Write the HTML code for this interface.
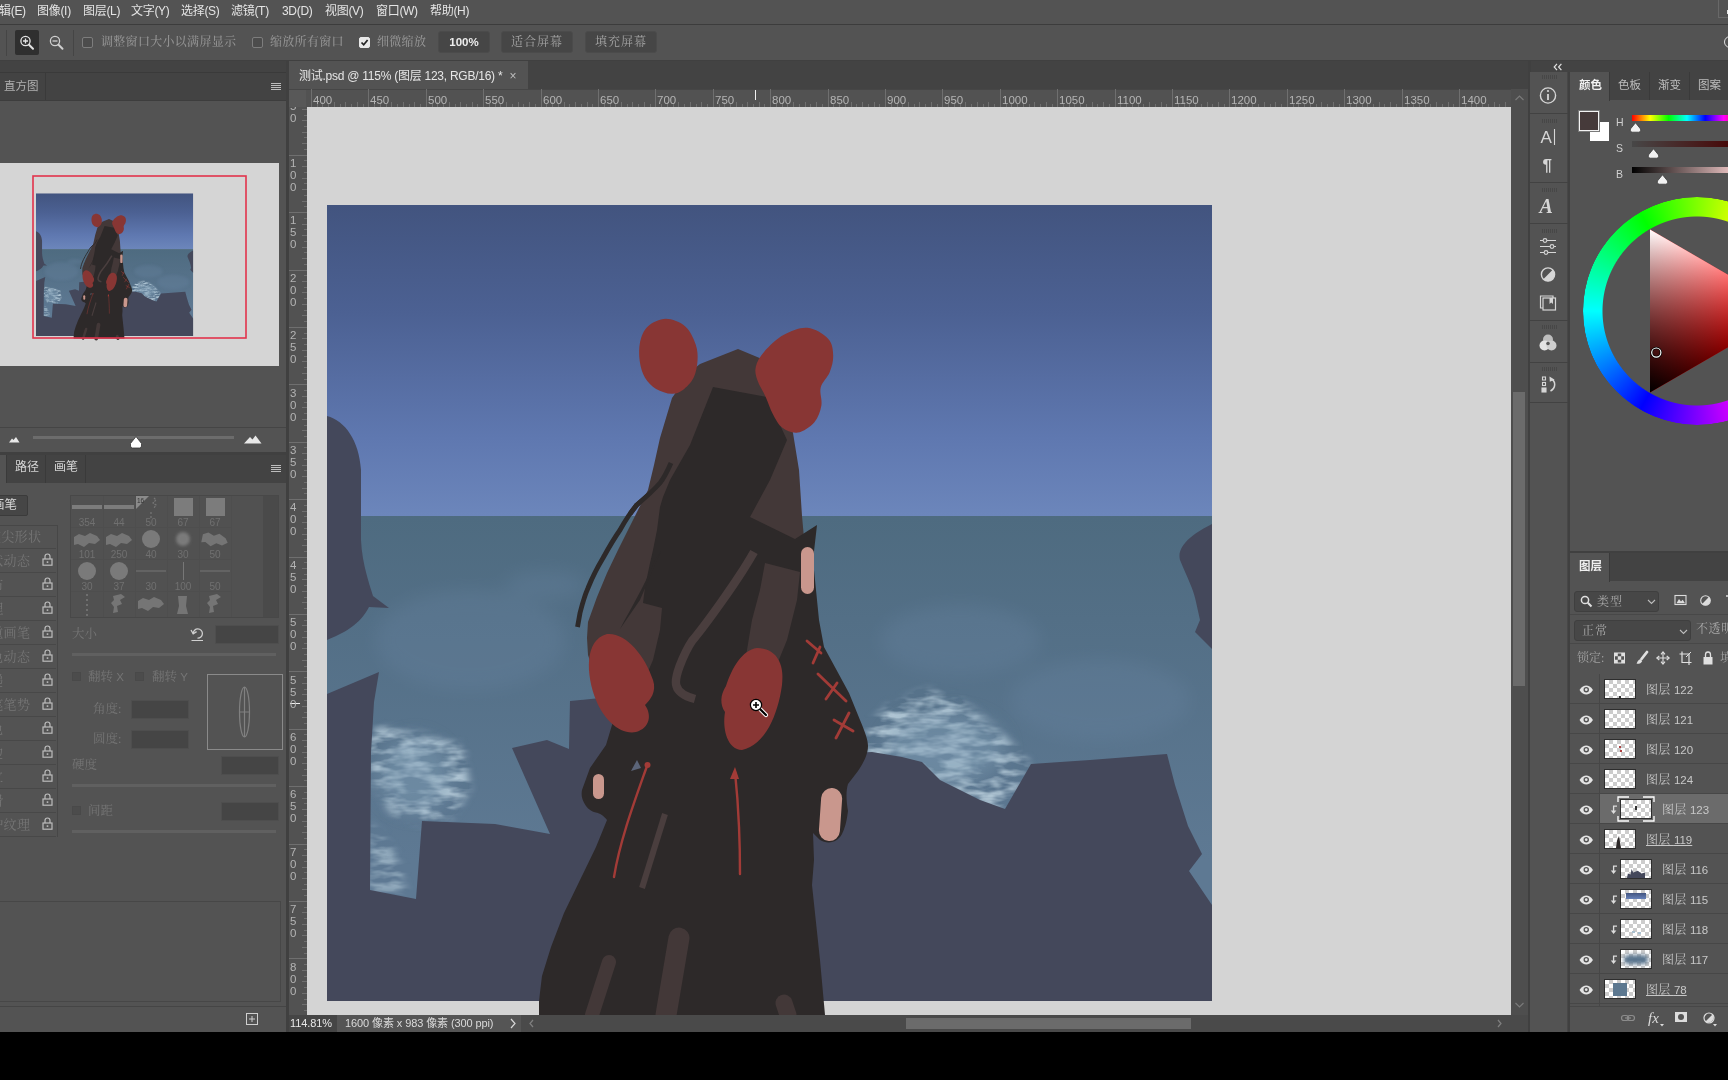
<!DOCTYPE html>
<html lang="zh-CN">
<head>
<meta charset="utf-8">
<title>测试.psd</title>
<style>
*{box-sizing:border-box;margin:0;padding:0}
html,body{width:1728px;height:1080px;overflow:hidden;background:#535353}
body{will-change:transform}
body{position:relative;font-family:"Liberation Sans","Noto Sans CJK SC",sans-serif;font-size:12px;color:#dcdcdc}
.abs{position:absolute}
.serif{font-family:"Liberation Serif","Noto Serif CJK SC",serif}
#menubar{left:0;top:0;width:1728px;height:24px;background:#535353}
#menubar span{position:absolute;top:2px;font-size:12px;line-height:18px;height:18px;color:#e4e4e4;white-space:nowrap;letter-spacing:-0.3px;font-family:"Liberation Sans","Noto Sans CJK SC",sans-serif}
#menuline{left:0;top:24px;width:1728px;height:1px;background:#3c3c3c}
#optbar{left:0;top:25px;width:1728px;height:35px;background:#535353}
#darkband{left:0;top:60px;width:1728px;height:972px;background:#404040}
#blackbar{left:0;top:1032px;width:1728px;height:48px;background:#000}
/* left column */
#leftcol{left:0;top:61px;width:286px;height:971px;background:#535353}
.tabbar{background:#434343}
.tab{position:absolute;top:0;height:100%;font-size:11.5px;color:#bdbdbd;border-right:1px solid #3a3a3a;white-space:nowrap}
.menuicon{position:absolute;width:10px;height:7px;border-top:1px solid #bdbdbd;border-bottom:1px solid #bdbdbd}
.menuicon:before{content:"";position:absolute;left:0;top:1px;width:10px;height:1px;background:#bdbdbd;box-shadow:0 2px 0 #bdbdbd}
/* document */
#doctabbar{left:289px;top:61px;width:1239px;height:28px;background:#434343}
#doctab{left:0;top:0;width:239px;height:28px;background:#535353;font-size:12px;color:#e6e6e6;white-space:nowrap;padding:7px 0 0 10px;letter-spacing:-0.25px;line-height:16px}
#hruler{left:289px;top:89px;width:1222px;height:18px;background:#525252;overflow:hidden}
#vruler{left:289px;top:107px;width:18px;height:908px;background:#525252;overflow:hidden}
#paste{left:307px;top:107px;width:1204px;height:908px;background:#d4d4d4;overflow:hidden}
#vscroll{left:1511px;top:89px;width:17px;height:926px;background:#4e4e4e}
#status{left:289px;top:1015px;width:1239px;height:17px;background:#4a4a4a}
/* right */
#strip{left:1530px;top:72px;width:38px;height:960px;background:#535353}
#rightcol{left:1570px;top:72px;width:158px;height:960px;background:#535353}

.cb{width:11px;height:11px;border:1px solid #7d7d7d;border-radius:2px;background:#4c4c4c}
.ot{font-size:12px;font-weight:500;color:#949494;white-space:nowrap;letter-spacing:0.3px;line-height:16px}
.ob{top:6px;height:22px;border:1px solid #4b4b4b;background:#464646;border-radius:3px;text-align:center;line-height:20px;font-size:12px;color:#a6a6a6;white-space:nowrap}
</style>
</head>
<body>
<div class="abs" id="menubar">
<span style="left:-1px">辑(E)</span><span style="left:37px">图像(I)</span><span style="left:83px">图层(L)</span><span style="left:131px">文字(Y)</span><span style="left:181px">选择(S)</span><span style="left:231px">滤镜(T)</span><span style="left:282px">3D(D)</span><span style="left:325px">视图(V)</span><span style="left:376px">窗口(W)</span><span style="left:430px">帮助(H)</span>
<div class="abs" style="left:1718px;top:-1px;width:20px;height:19px;border:1px solid #686868"></div><div class="abs" style="left:1727px;top:10px;width:3px;height:4px;background:#e8e8e8"></div></div>
<div class="abs" id="menuline"></div>
<div class="abs" id="optbar">
<div class="abs" style="left:6px;top:5px;width:1px;height:26px;background:#454545"></div>
<div class="abs" style="left:15px;top:5px;width:24px;height:25px;background:#2f2f2f;border-radius:2px"></div>
<svg class="abs" style="left:15px;top:5px" width="60" height="25" viewBox="0 0 60 25" fill="none" stroke="#e4e4e4" stroke-width="1.3">
<circle cx="10.5" cy="11" r="4.6"/><path d="M8,11 H13 M10.5,8.5 V13.5"/><path d="M14,14.7 L18,18.7" stroke-width="2" stroke-linecap="round"/>
<g stroke="#d0d0d0"><circle cx="40" cy="11" r="4.6"/><path d="M37.5,11 H42.5"/><path d="M43.5,14.7 L47.5,18.7" stroke-width="2" stroke-linecap="round"/></g>
</svg>
<div class="abs" style="left:73px;top:5px;width:1px;height:26px;background:#454545"></div>
<div class="abs cb" style="left:82px;top:12px"></div>
<div class="abs serif ot" style="left:101px;top:9px">调整窗口大小以满屏显示</div>
<div class="abs cb" style="left:252px;top:12px"></div>
<div class="abs serif ot" style="left:270px;top:9px">缩放所有窗口</div>
<div class="abs cb" style="left:359px;top:12px;background:#e8e8e8;border-color:#e8e8e8"><svg width="11" height="11" viewBox="0 0 11 11" style="position:absolute;left:-1px;top:-1px"><path d="M2.5,5.5 L4.7,7.8 L8.6,3" fill="none" stroke="#222" stroke-width="1.7"/></svg></div>
<div class="abs serif ot" style="left:377px;top:9px">细微缩放</div>
<div class="abs ob" style="left:438px;width:52px;color:#ececec;font-size:11.5px;font-weight:bold">100%</div>
<div class="abs ob serif" style="left:501px;width:72px;letter-spacing:1px">适合屏幕</div>
<div class="abs ob serif" style="left:585px;width:72px;letter-spacing:1px">填充屏幕</div>
<div class="abs" style="left:1724px;top:11px;width:12px;height:12px;border:1.5px solid #e0e0e0;border-radius:50%"></div>
</div>
<div class="abs" id="darkband"></div>
<div class="abs" id="leftcol"><div class="abs tabbar" style="left:0;top:0;width:286px;height:39px"></div>
<div class="abs" style="left:0;top:11px;width:286px;height:1px;background:#3a3a3a"></div>
<div class="abs tab" style="left:0;top:12px;width:46px;height:27px;line-height:26px;padding-left:4px;color:#b0b0b0">直方图</div>
<div class="menuicon" style="left:271px;top:22px"></div>
<div class="abs" style="left:0;top:39px;width:286px;height:1px;background:#3d3d3d"></div>
<div class="abs" style="left:0;top:102px;width:279px;height:203px;background:#d5d5d5;overflow:hidden"><!--NAV--><svg class="abs" style="left:0;top:0" width="279" height="203" viewBox="0 163 279 203"><use href="#artall" transform="translate(36 193.3) scale(0.1777 0.1793) translate(-327 -205)"/><rect x="33" y="176" width="213" height="162" fill="none" stroke="#e2334c" stroke-width="1.6"/></svg><!--/NAV--></div>
<div class="abs" style="left:0;top:366px;width:286px;height:1px;background:#454545"></div>
<div class="abs" style="left:33px;top:375px;width:201px;height:3px;background:#6c6c6c"></div>
<svg class="abs" style="left:0;top:370px" width="286" height="20" viewBox="0 431 286 20"><path d="M9,442.5 L12,438.5 L13.5,440 L16,437 L19.5,442.5 Z" fill="#e8e8e8"/><path d="M244,443.5 L250,437 L252.5,439.5 L255.5,435.5 L261.5,443.5 Z" fill="#e8e8e8"/><path d="M136,436.5 L141.5,443.5 V446 Q141.5,448 139.5,448 H132.5 Q130.5,448 130.5,446 V443.5 Z" fill="#fff" stroke="#333" stroke-width="0.8"/></svg>
<div class="abs" style="left:0;top:391px;width:286px;height:3px;background:#404040"></div>
<div class="abs tabbar" style="left:0;top:394px;width:286px;height:28px"></div>
<div class="abs" style="left:0;top:394px;width:6px;height:28px;background:#535353"></div>
<div class="abs tab" style="left:6px;top:394px;width:40px;height:28px;line-height:24px;padding-left:8px;border-left:1px solid #3a3a3a;color:#d4d4d4;font-size:12px">路径</div>
<div class="abs tab" style="left:46px;top:394px;width:40px;height:28px;line-height:24px;padding-left:8px;color:#d4d4d4;font-size:12px">画笔</div>
<div class="menuicon" style="left:271px;top:404px"></div>
<div class="abs" style="left:-3px;top:434px;width:31px;height:21px;background:#464646;border:1px solid #3b3b3b;border-radius:2px;overflow:hidden"><span class="abs" style="left:-6px;top:1px;font-size:12.5px;color:#d6d6d6;white-space:nowrap;line-height:17px">画笔</span></div>
<div class="abs" style="left:-1px;top:464px;width:59px;height:312px;border:1px solid #474747;border-bottom:none"></div>
<div class="abs" style="left:0;top:487px;width:56px;height:1px;background:#484848"></div>
<div class="abs serif" style="left:-12px;top:467px;font-size:13px;letter-spacing:0.3px;line-height:18px;color:#757575;white-space:nowrap">笔尖形状</div>
<div class="abs" style="left:0;top:511px;width:56px;height:1px;background:#484848"></div>
<div class="abs serif" style="left:-23px;top:491px;font-size:13px;letter-spacing:0.3px;line-height:18px;color:#757575;white-space:nowrap">形状动态</div>
<div class="abs" style="left:42px;top:492px;width:11px;height:13px"><svg width="11" height="13" viewBox="0 0 11 13" fill="none" stroke="#bcbcbc" stroke-width="1.2"><path d="M3,6 V3.6 Q3,1 5.5,1 Q8,1 8,3.6 V6"/><rect x="1" y="6" width="9" height="6.2"/><rect x="4.7" y="8.3" width="1.6" height="1.6" fill="#bcbcbc" stroke="none"/></svg></div>
<div class="abs" style="left:0;top:535px;width:56px;height:1px;background:#484848"></div>
<div class="abs serif" style="left:-23px;top:515px;font-size:13px;letter-spacing:0.3px;line-height:18px;color:#757575;white-space:nowrap">散布</div>
<div class="abs" style="left:42px;top:516px;width:11px;height:13px"><svg width="11" height="13" viewBox="0 0 11 13" fill="none" stroke="#bcbcbc" stroke-width="1.2"><path d="M3,6 V3.6 Q3,1 5.5,1 Q8,1 8,3.6 V6"/><rect x="1" y="6" width="9" height="6.2"/><rect x="4.7" y="8.3" width="1.6" height="1.6" fill="#bcbcbc" stroke="none"/></svg></div>
<div class="abs" style="left:0;top:559px;width:56px;height:1px;background:#484848"></div>
<div class="abs serif" style="left:-23px;top:539px;font-size:13px;letter-spacing:0.3px;line-height:18px;color:#757575;white-space:nowrap">纹理</div>
<div class="abs" style="left:42px;top:540px;width:11px;height:13px"><svg width="11" height="13" viewBox="0 0 11 13" fill="none" stroke="#bcbcbc" stroke-width="1.2"><path d="M3,6 V3.6 Q3,1 5.5,1 Q8,1 8,3.6 V6"/><rect x="1" y="6" width="9" height="6.2"/><rect x="4.7" y="8.3" width="1.6" height="1.6" fill="#bcbcbc" stroke="none"/></svg></div>
<div class="abs" style="left:0;top:583px;width:56px;height:1px;background:#484848"></div>
<div class="abs serif" style="left:-23px;top:563px;font-size:13px;letter-spacing:0.3px;line-height:18px;color:#757575;white-space:nowrap">双重画笔</div>
<div class="abs" style="left:42px;top:564px;width:11px;height:13px"><svg width="11" height="13" viewBox="0 0 11 13" fill="none" stroke="#bcbcbc" stroke-width="1.2"><path d="M3,6 V3.6 Q3,1 5.5,1 Q8,1 8,3.6 V6"/><rect x="1" y="6" width="9" height="6.2"/><rect x="4.7" y="8.3" width="1.6" height="1.6" fill="#bcbcbc" stroke="none"/></svg></div>
<div class="abs" style="left:0;top:607px;width:56px;height:1px;background:#484848"></div>
<div class="abs serif" style="left:-23px;top:587px;font-size:13px;letter-spacing:0.3px;line-height:18px;color:#757575;white-space:nowrap">颜色动态</div>
<div class="abs" style="left:42px;top:588px;width:11px;height:13px"><svg width="11" height="13" viewBox="0 0 11 13" fill="none" stroke="#bcbcbc" stroke-width="1.2"><path d="M3,6 V3.6 Q3,1 5.5,1 Q8,1 8,3.6 V6"/><rect x="1" y="6" width="9" height="6.2"/><rect x="4.7" y="8.3" width="1.6" height="1.6" fill="#bcbcbc" stroke="none"/></svg></div>
<div class="abs" style="left:0;top:631px;width:56px;height:1px;background:#484848"></div>
<div class="abs serif" style="left:-23px;top:611px;font-size:13px;letter-spacing:0.3px;line-height:18px;color:#757575;white-space:nowrap">传递</div>
<div class="abs" style="left:42px;top:612px;width:11px;height:13px"><svg width="11" height="13" viewBox="0 0 11 13" fill="none" stroke="#bcbcbc" stroke-width="1.2"><path d="M3,6 V3.6 Q3,1 5.5,1 Q8,1 8,3.6 V6"/><rect x="1" y="6" width="9" height="6.2"/><rect x="4.7" y="8.3" width="1.6" height="1.6" fill="#bcbcbc" stroke="none"/></svg></div>
<div class="abs" style="left:0;top:655px;width:56px;height:1px;background:#484848"></div>
<div class="abs serif" style="left:-23px;top:635px;font-size:13px;letter-spacing:0.3px;line-height:18px;color:#757575;white-space:nowrap">画笔笔势</div>
<div class="abs" style="left:42px;top:636px;width:11px;height:13px"><svg width="11" height="13" viewBox="0 0 11 13" fill="none" stroke="#bcbcbc" stroke-width="1.2"><path d="M3,6 V3.6 Q3,1 5.5,1 Q8,1 8,3.6 V6"/><rect x="1" y="6" width="9" height="6.2"/><rect x="4.7" y="8.3" width="1.6" height="1.6" fill="#bcbcbc" stroke="none"/></svg></div>
<div class="abs" style="left:0;top:679px;width:56px;height:1px;background:#484848"></div>
<div class="abs serif" style="left:-23px;top:659px;font-size:13px;letter-spacing:0.3px;line-height:18px;color:#757575;white-space:nowrap">杂色</div>
<div class="abs" style="left:42px;top:660px;width:11px;height:13px"><svg width="11" height="13" viewBox="0 0 11 13" fill="none" stroke="#bcbcbc" stroke-width="1.2"><path d="M3,6 V3.6 Q3,1 5.5,1 Q8,1 8,3.6 V6"/><rect x="1" y="6" width="9" height="6.2"/><rect x="4.7" y="8.3" width="1.6" height="1.6" fill="#bcbcbc" stroke="none"/></svg></div>
<div class="abs" style="left:0;top:703px;width:56px;height:1px;background:#484848"></div>
<div class="abs serif" style="left:-23px;top:683px;font-size:13px;letter-spacing:0.3px;line-height:18px;color:#757575;white-space:nowrap">湿边</div>
<div class="abs" style="left:42px;top:684px;width:11px;height:13px"><svg width="11" height="13" viewBox="0 0 11 13" fill="none" stroke="#bcbcbc" stroke-width="1.2"><path d="M3,6 V3.6 Q3,1 5.5,1 Q8,1 8,3.6 V6"/><rect x="1" y="6" width="9" height="6.2"/><rect x="4.7" y="8.3" width="1.6" height="1.6" fill="#bcbcbc" stroke="none"/></svg></div>
<div class="abs" style="left:0;top:727px;width:56px;height:1px;background:#484848"></div>
<div class="abs serif" style="left:-23px;top:707px;font-size:13px;letter-spacing:0.3px;line-height:18px;color:#757575;white-space:nowrap">建立</div>
<div class="abs" style="left:42px;top:708px;width:11px;height:13px"><svg width="11" height="13" viewBox="0 0 11 13" fill="none" stroke="#bcbcbc" stroke-width="1.2"><path d="M3,6 V3.6 Q3,1 5.5,1 Q8,1 8,3.6 V6"/><rect x="1" y="6" width="9" height="6.2"/><rect x="4.7" y="8.3" width="1.6" height="1.6" fill="#bcbcbc" stroke="none"/></svg></div>
<div class="abs" style="left:0;top:751px;width:56px;height:1px;background:#484848"></div>
<div class="abs serif" style="left:-23px;top:731px;font-size:13px;letter-spacing:0.3px;line-height:18px;color:#757575;white-space:nowrap">平滑</div>
<div class="abs" style="left:42px;top:732px;width:11px;height:13px"><svg width="11" height="13" viewBox="0 0 11 13" fill="none" stroke="#bcbcbc" stroke-width="1.2"><path d="M3,6 V3.6 Q3,1 5.5,1 Q8,1 8,3.6 V6"/><rect x="1" y="6" width="9" height="6.2"/><rect x="4.7" y="8.3" width="1.6" height="1.6" fill="#bcbcbc" stroke="none"/></svg></div>
<div class="abs" style="left:0;top:775px;width:56px;height:1px;background:#484848"></div>
<div class="abs serif" style="left:-23px;top:755px;font-size:13px;letter-spacing:0.3px;line-height:18px;color:#757575;white-space:nowrap">保护纹理</div>
<div class="abs" style="left:42px;top:756px;width:11px;height:13px"><svg width="11" height="13" viewBox="0 0 11 13" fill="none" stroke="#bcbcbc" stroke-width="1.2"><path d="M3,6 V3.6 Q3,1 5.5,1 Q8,1 8,3.6 V6"/><rect x="1" y="6" width="9" height="6.2"/><rect x="4.7" y="8.3" width="1.6" height="1.6" fill="#bcbcbc" stroke="none"/></svg></div>
<div class="abs" style="left:70px;top:434px;width:209px;height:123px;border:1px solid #484848;background:#515151"></div>
<div class="abs" style="left:263px;top:435px;width:15px;height:121px;background:#4a4a4a"></div>
<svg class="abs" style="left:70px;top:434px" width="194" height="122" viewBox="70 495 194 122" font-family="Liberation Sans, sans-serif" font-size="10" fill="#707070" text-anchor="middle">
<path d="M103.5,496 V617" stroke="#4e4e4e" stroke-width="1"/>
<path d="M135.5,496 V617" stroke="#4e4e4e" stroke-width="1"/>
<path d="M167.5,496 V617" stroke="#4e4e4e" stroke-width="1"/>
<path d="M199.5,496 V617" stroke="#4e4e4e" stroke-width="1"/>
<path d="M231.5,496 V617" stroke="#4e4e4e" stroke-width="1"/>
<path d="M71,527.5 H231" stroke="#4e4e4e" stroke-width="1"/>
<path d="M71,559.5 H231" stroke="#4e4e4e" stroke-width="1"/>
<path d="M71,591.5 H231" stroke="#4e4e4e" stroke-width="1"/>
<text x="87" y="526">354</text>
<text x="119" y="526">44</text>
<text x="151" y="526">50</text>
<text x="183" y="526">67</text>
<text x="215" y="526">67</text>
<text x="87" y="558">101</text>
<text x="119" y="558">250</text>
<text x="151" y="558">40</text>
<text x="183" y="558">30</text>
<text x="215" y="558">50</text>
<text x="87" y="590">30</text>
<text x="119" y="590">37</text>
<text x="151" y="590">30</text>
<text x="183" y="590">100</text>
<text x="215" y="590">50</text>
<rect x="72" y="505" width="30" height="4" fill="#7c7c7c"/><rect x="104" y="505" width="30" height="4" fill="#7c7c7c"/>
<path d="M136,496 H149 L136,509 Z" fill="#8a8a8a"/><text x="140.5" y="503" font-size="6.5" fill="#333">16</text>
<path d="M154,498 l2,2 l-3,3 l3,2 l-2,3 M151,512 v2 M151,516 v2" stroke="#777" stroke-width="1.2" fill="none" stroke-dasharray="2 1"/>
<rect x="174" y="498" width="19" height="18" fill="#7c7c7c"/><rect x="206" y="498" width="19" height="18" fill="#7c7c7c"/>
<path transform="translate(87,540)" d="M-13,-3 l5,-3 l6,2 l5,-3 l7,3 l3,4 l-5,4 l-6,-1 l-5,4 l-6,-3 l-4,1 z" fill="#757575"/><path transform="translate(119,540)" d="M-13,-3 l5,-3 l6,2 l5,-3 l7,3 l3,4 l-5,4 l-6,-1 l-5,4 l-6,-3 l-4,1 z" fill="#757575"/>
<circle cx="151" cy="539" r="9" fill="#7a7a7a"/>
<circle cx="183" cy="539" r="7" fill="#7a7a7a" filter="url(#b2)"/>
<path transform="translate(215,540) rotate(12)" d="M-13,-3 l5,-3 l6,2 l5,-3 l7,3 l3,4 l-5,4 l-6,-1 l-5,4 l-6,-3 l-4,1 z" fill="#757575"/>
<circle cx="87" cy="571" r="9" fill="#7a7a7a"/><circle cx="119" cy="571" r="9" fill="#7a7a7a"/>
<path d="M136,571 H166 M200,571 H230" stroke="#777" stroke-width="1.2"/><path d="M183.5,562 V580" stroke="#777" stroke-width="1"/>
<path d="M87,594 V616" stroke="#777" stroke-width="1.6" stroke-dasharray="2 3"/>
<path d="M113,596 l8,-2 l4,3 l-5,3 l2,4 l-5,2 l1,6 l-5,1 l1,-6 l-3,-4 l3,-3 z" fill="#757575"/>
<path transform="translate(151,604)" d="M-13,-3 l5,-3 l6,2 l5,-3 l7,3 l3,4 l-5,4 l-6,-1 l-5,4 l-6,-3 l-4,1 z" fill="#757575"/>
<path d="M178,596 h9 l-1,10 l2,8 h-11 l2,-8 z" fill="#757575"/>
<path d="M209,596 l8,-2 l4,3 l-5,3 l2,4 l-5,2 l1,6 l-5,1 l1,-6 l-3,-4 l3,-3 z" fill="#757575"/>
</svg>
<div class="abs serif" style="left:72px;top:565px;color:#757575;font-size:12.5px;white-space:nowrap;line-height:16px">大小</div>
<svg class="abs" style="left:190px;top:565px" width="15" height="16" viewBox="0 0 15 16" fill="none" stroke="#d0d0d0" stroke-width="1.3"><path d="M3.2,7.5 A4.6,4.6 0 1 1 7.5,12.1"/><path d="M1,4 L3.2,7.8 L6.6,5.6" /><path d="M1.5,14.5 H13" stroke-width="1"/></svg>
<div class="abs" style="left:215px;top:564px;width:64px;height:19px;background:#454545;border:1px solid #4e4e4e"></div>
<div class="abs" style="left:72px;top:592px;width:204px;height:3px;background:#606060"></div>
<div class="abs" style="left:72px;top:723px;width:204px;height:3px;background:#606060"></div>
<div class="abs" style="left:72px;top:769px;width:204px;height:3px;background:#606060"></div>
<div class="abs" style="left:72px;top:611px;width:9px;height:9px;background:#4c4c4c;border:1px solid #494949"></div>
<div class="abs serif" style="left:88px;top:608px;color:#757575;font-size:12.5px;white-space:nowrap;line-height:16px">翻转 <span style="font-family:Liberation Sans,sans-serif;font-size:11.5px">X</span></div>
<div class="abs" style="left:135px;top:611px;width:9px;height:9px;background:#4c4c4c;border:1px solid #494949"></div>
<div class="abs serif" style="left:152px;top:608px;color:#757575;font-size:12.5px;white-space:nowrap;line-height:16px">翻转 <span style="font-family:Liberation Sans,sans-serif;font-size:11.5px">Y</span></div>
<div class="abs" style="left:207px;top:613px;width:76px;height:76px;border:1px solid #8a8a8a"></div>
<svg class="abs" style="left:207px;top:613px" width="76" height="76" viewBox="0 0 76 76" fill="none" stroke="#808080" stroke-width="1.2"><ellipse cx="37.5" cy="38" rx="5" ry="25"/><path d="M37.5,13 V63 M32.5,38 H42.5"/></svg>
<div class="abs serif" style="left:93px;top:640px;color:#757575;font-size:12.5px;white-space:nowrap;line-height:16px">角度:</div>
<div class="abs" style="left:131px;top:639px;width:58px;height:19px;background:#454545;border:1px solid #4e4e4e"></div>
<div class="abs serif" style="left:93px;top:670px;color:#757575;font-size:12.5px;white-space:nowrap;line-height:16px">圆度:</div>
<div class="abs" style="left:131px;top:669px;width:58px;height:19px;background:#454545;border:1px solid #4e4e4e"></div>
<div class="abs serif" style="left:72px;top:696px;color:#757575;font-size:12.5px;white-space:nowrap;line-height:16px">硬度</div>
<div class="abs" style="left:221px;top:695px;width:58px;height:19px;background:#454545;border:1px solid #4e4e4e"></div>
<div class="abs" style="left:72px;top:745px;width:9px;height:9px;background:#4c4c4c;border:1px solid #494949"></div>
<div class="abs serif" style="left:88px;top:742px;color:#757575;font-size:12.5px;white-space:nowrap;line-height:16px">间距</div>
<div class="abs" style="left:221px;top:741px;width:58px;height:19px;background:#454545;border:1px solid #4e4e4e"></div>
<div class="abs" style="left:-1px;top:840px;width:282px;height:101px;border:1px solid #474747"></div>
<div class="abs" style="left:0;top:945px;width:286px;height:1px;background:#454545"></div>
<svg class="abs" style="left:246px;top:952px" width="12" height="12" viewBox="0 0 12 12" fill="none" stroke="#cfcfcf" stroke-width="1"><rect x="0.5" y="0.5" width="11" height="11"/><path d="M3,6 H9 M6,3 V9"/></svg></div>
<div class="abs" id="doctabbar"><div class="abs" id="doctab">测试.psd @ 115% (图层 123, RGB/16) * <span style="color:#bdbdbd;margin-left:4px">×</span></div></div>
<div class="abs" id="hruler"><div class="abs" style="left:0;top:0;width:1222px;height:1px;background:#464646"></div><div class="abs" style="left:0;top:1px;width:17px;height:17px;background-color:#585858;background-image:radial-gradient(#4a4a4a 0.6px,transparent 0.7px);background-size:2px 2px"></div>
<svg class="abs" style="left:0;top:0" width="1222" height="18" viewBox="289 89 1222 18" shape-rendering="crispEdges">
<path d="M311.5,89 V107 M317.5,104 V107 M322.5,102 V107 M328.5,104 V107 M334.5,102 V107 M340.5,104 V107 M345.5,102 V107 M351.5,104 V107 M357.5,102 V107 M363.5,104 V107 M368.5,89 V107 M374.5,104 V107 M380.5,102 V107 M386.5,104 V107 M391.5,102 V107 M397.5,104 V107 M403.5,102 V107 M409.5,104 V107 M414.5,102 V107 M420.5,104 V107 M426.5,89 V107 M432.5,104 V107 M437.5,102 V107 M443.5,104 V107 M449.5,102 V107 M455.5,104 V107 M460.5,102 V107 M466.5,104 V107 M472.5,102 V107 M477.5,104 V107 M483.5,89 V107 M489.5,104 V107 M495.5,102 V107 M500.5,104 V107 M506.5,102 V107 M512.5,104 V107 M518.5,102 V107 M523.5,104 V107 M529.5,102 V107 M535.5,104 V107 M541.5,89 V107 M546.5,104 V107 M552.5,102 V107 M558.5,104 V107 M564.5,102 V107 M569.5,104 V107 M575.5,102 V107 M581.5,104 V107 M587.5,102 V107 M592.5,104 V107 M598.5,89 V107 M604.5,104 V107 M610.5,102 V107 M615.5,104 V107 M621.5,102 V107 M627.5,104 V107 M632.5,102 V107 M638.5,104 V107 M644.5,102 V107 M650.5,104 V107 M655.5,89 V107 M661.5,104 V107 M667.5,102 V107 M673.5,104 V107 M678.5,102 V107 M684.5,104 V107 M690.5,102 V107 M696.5,104 V107 M701.5,102 V107 M707.5,104 V107 M713.5,89 V107 M719.5,104 V107 M724.5,102 V107 M730.5,104 V107 M736.5,102 V107 M742.5,104 V107 M747.5,102 V107 M753.5,104 V107 M759.5,102 V107 M764.5,104 V107 M770.5,89 V107 M776.5,104 V107 M782.5,102 V107 M787.5,104 V107 M793.5,102 V107 M799.5,104 V107 M805.5,102 V107 M810.5,104 V107 M816.5,102 V107 M822.5,104 V107 M828.5,89 V107 M833.5,104 V107 M839.5,102 V107 M845.5,104 V107 M851.5,102 V107 M856.5,104 V107 M862.5,102 V107 M868.5,104 V107 M874.5,102 V107 M879.5,104 V107 M885.5,89 V107 M891.5,104 V107 M897.5,102 V107 M902.5,104 V107 M908.5,102 V107 M914.5,104 V107 M919.5,102 V107 M925.5,104 V107 M931.5,102 V107 M937.5,104 V107 M942.5,89 V107 M948.5,104 V107 M954.5,102 V107 M960.5,104 V107 M965.5,102 V107 M971.5,104 V107 M977.5,102 V107 M983.5,104 V107 M988.5,102 V107 M994.5,104 V107 M1000.5,89 V107 M1006.5,104 V107 M1011.5,102 V107 M1017.5,104 V107 M1023.5,102 V107 M1029.5,104 V107 M1034.5,102 V107 M1040.5,104 V107 M1046.5,102 V107 M1052.5,104 V107 M1057.5,89 V107 M1063.5,104 V107 M1069.5,102 V107 M1074.5,104 V107 M1080.5,102 V107 M1086.5,104 V107 M1092.5,102 V107 M1097.5,104 V107 M1103.5,102 V107 M1109.5,104 V107 M1115.5,89 V107 M1120.5,104 V107 M1126.5,102 V107 M1132.5,104 V107 M1138.5,102 V107 M1143.5,104 V107 M1149.5,102 V107 M1155.5,104 V107 M1161.5,102 V107 M1166.5,104 V107 M1172.5,89 V107 M1178.5,104 V107 M1184.5,102 V107 M1189.5,104 V107 M1195.5,102 V107 M1201.5,104 V107 M1207.5,102 V107 M1212.5,104 V107 M1218.5,102 V107 M1224.5,104 V107 M1229.5,89 V107 M1235.5,104 V107 M1241.5,102 V107 M1247.5,104 V107 M1252.5,102 V107 M1258.5,104 V107 M1264.5,102 V107 M1270.5,104 V107 M1275.5,102 V107 M1281.5,104 V107 M1287.5,89 V107 M1293.5,104 V107 M1298.5,102 V107 M1304.5,104 V107 M1310.5,102 V107 M1316.5,104 V107 M1321.5,102 V107 M1327.5,104 V107 M1333.5,102 V107 M1339.5,104 V107 M1344.5,89 V107 M1350.5,104 V107 M1356.5,102 V107 M1362.5,104 V107 M1367.5,102 V107 M1373.5,104 V107 M1379.5,102 V107 M1384.5,104 V107 M1390.5,102 V107 M1396.5,104 V107 M1402.5,89 V107 M1407.5,104 V107 M1413.5,102 V107 M1419.5,104 V107 M1425.5,102 V107 M1430.5,104 V107 M1436.5,102 V107 M1442.5,104 V107 M1448.5,102 V107 M1453.5,104 V107 M1459.5,89 V107 M1465.5,104 V107 M1471.5,102 V107 M1476.5,104 V107 M1482.5,102 V107 M1488.5,104 V107 M1494.5,102 V107 M1499.5,104 V107 M1505.5,102 V107" stroke="#6f6f6f" stroke-width="1" fill="none"/>
<path d="M755.5,90 V100" stroke="#f0f0f0" stroke-width="1"/>
<text x="313" y="104" font-family="Liberation Sans, sans-serif" font-size="11.5" fill="#b4b4b4" shape-rendering="auto">400</text>
<text x="370" y="104" font-family="Liberation Sans, sans-serif" font-size="11.5" fill="#b4b4b4" shape-rendering="auto">450</text>
<text x="428" y="104" font-family="Liberation Sans, sans-serif" font-size="11.5" fill="#b4b4b4" shape-rendering="auto">500</text>
<text x="485" y="104" font-family="Liberation Sans, sans-serif" font-size="11.5" fill="#b4b4b4" shape-rendering="auto">550</text>
<text x="543" y="104" font-family="Liberation Sans, sans-serif" font-size="11.5" fill="#b4b4b4" shape-rendering="auto">600</text>
<text x="600" y="104" font-family="Liberation Sans, sans-serif" font-size="11.5" fill="#b4b4b4" shape-rendering="auto">650</text>
<text x="657" y="104" font-family="Liberation Sans, sans-serif" font-size="11.5" fill="#b4b4b4" shape-rendering="auto">700</text>
<text x="715" y="104" font-family="Liberation Sans, sans-serif" font-size="11.5" fill="#b4b4b4" shape-rendering="auto">750</text>
<text x="772" y="104" font-family="Liberation Sans, sans-serif" font-size="11.5" fill="#b4b4b4" shape-rendering="auto">800</text>
<text x="830" y="104" font-family="Liberation Sans, sans-serif" font-size="11.5" fill="#b4b4b4" shape-rendering="auto">850</text>
<text x="887" y="104" font-family="Liberation Sans, sans-serif" font-size="11.5" fill="#b4b4b4" shape-rendering="auto">900</text>
<text x="944" y="104" font-family="Liberation Sans, sans-serif" font-size="11.5" fill="#b4b4b4" shape-rendering="auto">950</text>
<text x="1002" y="104" font-family="Liberation Sans, sans-serif" font-size="11.5" fill="#b4b4b4" shape-rendering="auto">1000</text>
<text x="1059" y="104" font-family="Liberation Sans, sans-serif" font-size="11.5" fill="#b4b4b4" shape-rendering="auto">1050</text>
<text x="1117" y="104" font-family="Liberation Sans, sans-serif" font-size="11.5" fill="#b4b4b4" shape-rendering="auto">1100</text>
<text x="1174" y="104" font-family="Liberation Sans, sans-serif" font-size="11.5" fill="#b4b4b4" shape-rendering="auto">1150</text>
<text x="1231" y="104" font-family="Liberation Sans, sans-serif" font-size="11.5" fill="#b4b4b4" shape-rendering="auto">1200</text>
<text x="1289" y="104" font-family="Liberation Sans, sans-serif" font-size="11.5" fill="#b4b4b4" shape-rendering="auto">1250</text>
<text x="1346" y="104" font-family="Liberation Sans, sans-serif" font-size="11.5" fill="#b4b4b4" shape-rendering="auto">1300</text>
<text x="1404" y="104" font-family="Liberation Sans, sans-serif" font-size="11.5" fill="#b4b4b4" shape-rendering="auto">1350</text>
<text x="1461" y="104" font-family="Liberation Sans, sans-serif" font-size="11.5" fill="#b4b4b4" shape-rendering="auto">1400</text>
</svg></div>
<div class="abs" id="vruler"><svg class="abs" style="left:0;top:0" width="18" height="908" viewBox="289 107 18 908" shape-rendering="crispEdges">
<path d="M302,109.5 H307 M304,115.5 H307 M302,120.5 H307 M304,126.5 H307 M302,132.5 H307 M304,137.5 H307 M302,143.5 H307 M304,149.5 H307 M289,155.5 H307 M304,160.5 H307 M302,166.5 H307 M304,172.5 H307 M302,178.5 H307 M304,183.5 H307 M302,189.5 H307 M304,195.5 H307 M302,201.5 H307 M304,206.5 H307 M289,212.5 H307 M304,218.5 H307 M302,224.5 H307 M304,229.5 H307 M302,235.5 H307 M304,241.5 H307 M302,247.5 H307 M304,252.5 H307 M302,258.5 H307 M304,264.5 H307 M289,270.5 H307 M304,275.5 H307 M302,281.5 H307 M304,287.5 H307 M302,292.5 H307 M304,298.5 H307 M302,304.5 H307 M304,310.5 H307 M302,315.5 H307 M304,321.5 H307 M289,327.5 H307 M304,333.5 H307 M302,338.5 H307 M304,344.5 H307 M302,350.5 H307 M304,356.5 H307 M302,361.5 H307 M304,367.5 H307 M302,373.5 H307 M304,379.5 H307 M289,384.5 H307 M304,390.5 H307 M302,396.5 H307 M304,402.5 H307 M302,407.5 H307 M304,413.5 H307 M302,419.5 H307 M304,425.5 H307 M302,430.5 H307 M304,436.5 H307 M289,442.5 H307 M304,447.5 H307 M302,453.5 H307 M304,459.5 H307 M302,465.5 H307 M304,470.5 H307 M302,476.5 H307 M304,482.5 H307 M302,488.5 H307 M304,493.5 H307 M289,499.5 H307 M304,505.5 H307 M302,511.5 H307 M304,516.5 H307 M302,522.5 H307 M304,528.5 H307 M302,534.5 H307 M304,539.5 H307 M302,545.5 H307 M304,551.5 H307 M289,557.5 H307 M304,562.5 H307 M302,568.5 H307 M304,574.5 H307 M302,579.5 H307 M304,585.5 H307 M302,591.5 H307 M304,597.5 H307 M302,602.5 H307 M304,608.5 H307 M289,614.5 H307 M304,620.5 H307 M302,625.5 H307 M304,631.5 H307 M302,637.5 H307 M304,643.5 H307 M302,648.5 H307 M304,654.5 H307 M302,660.5 H307 M304,666.5 H307 M289,671.5 H307 M304,677.5 H307 M302,683.5 H307 M304,689.5 H307 M302,694.5 H307 M304,700.5 H307 M302,706.5 H307 M304,712.5 H307 M302,717.5 H307 M304,723.5 H307 M289,729.5 H307 M304,734.5 H307 M302,740.5 H307 M304,746.5 H307 M302,752.5 H307 M304,757.5 H307 M302,763.5 H307 M304,769.5 H307 M302,775.5 H307 M304,780.5 H307 M289,786.5 H307 M304,792.5 H307 M302,798.5 H307 M304,803.5 H307 M302,809.5 H307 M304,815.5 H307 M302,821.5 H307 M304,826.5 H307 M302,832.5 H307 M304,838.5 H307 M289,844.5 H307 M304,849.5 H307 M302,855.5 H307 M304,861.5 H307 M302,867.5 H307 M304,872.5 H307 M302,878.5 H307 M304,884.5 H307 M302,889.5 H307 M304,895.5 H307 M289,901.5 H307 M304,907.5 H307 M302,912.5 H307 M304,918.5 H307 M302,924.5 H307 M304,930.5 H307 M302,935.5 H307 M304,941.5 H307 M302,947.5 H307 M304,953.5 H307 M289,958.5 H307 M304,964.5 H307 M302,970.5 H307 M304,976.5 H307 M302,981.5 H307 M304,987.5 H307 M302,993.5 H307 M304,999.5 H307 M302,1004.5 H307 M304,1010.5 H307" stroke="#6f6f6f" stroke-width="1" fill="none"/>
<path d="M290,703.5 H300" stroke="#f0f0f0" stroke-width="1"/>
<text x="290" y="109.5" font-family="Liberation Sans, sans-serif" font-size="11.5" fill="#b4b4b4" shape-rendering="auto">5</text>
<text x="290" y="121.5" font-family="Liberation Sans, sans-serif" font-size="11.5" fill="#b4b4b4" shape-rendering="auto">0</text>
<text x="290" y="166.9" font-family="Liberation Sans, sans-serif" font-size="11.5" fill="#b4b4b4" shape-rendering="auto">1</text>
<text x="290" y="178.9" font-family="Liberation Sans, sans-serif" font-size="11.5" fill="#b4b4b4" shape-rendering="auto">0</text>
<text x="290" y="190.9" font-family="Liberation Sans, sans-serif" font-size="11.5" fill="#b4b4b4" shape-rendering="auto">0</text>
<text x="290" y="224.3" font-family="Liberation Sans, sans-serif" font-size="11.5" fill="#b4b4b4" shape-rendering="auto">1</text>
<text x="290" y="236.3" font-family="Liberation Sans, sans-serif" font-size="11.5" fill="#b4b4b4" shape-rendering="auto">5</text>
<text x="290" y="248.3" font-family="Liberation Sans, sans-serif" font-size="11.5" fill="#b4b4b4" shape-rendering="auto">0</text>
<text x="290" y="281.7" font-family="Liberation Sans, sans-serif" font-size="11.5" fill="#b4b4b4" shape-rendering="auto">2</text>
<text x="290" y="293.7" font-family="Liberation Sans, sans-serif" font-size="11.5" fill="#b4b4b4" shape-rendering="auto">0</text>
<text x="290" y="305.7" font-family="Liberation Sans, sans-serif" font-size="11.5" fill="#b4b4b4" shape-rendering="auto">0</text>
<text x="290" y="339.1" font-family="Liberation Sans, sans-serif" font-size="11.5" fill="#b4b4b4" shape-rendering="auto">2</text>
<text x="290" y="351.1" font-family="Liberation Sans, sans-serif" font-size="11.5" fill="#b4b4b4" shape-rendering="auto">5</text>
<text x="290" y="363.1" font-family="Liberation Sans, sans-serif" font-size="11.5" fill="#b4b4b4" shape-rendering="auto">0</text>
<text x="290" y="396.5" font-family="Liberation Sans, sans-serif" font-size="11.5" fill="#b4b4b4" shape-rendering="auto">3</text>
<text x="290" y="408.5" font-family="Liberation Sans, sans-serif" font-size="11.5" fill="#b4b4b4" shape-rendering="auto">0</text>
<text x="290" y="420.5" font-family="Liberation Sans, sans-serif" font-size="11.5" fill="#b4b4b4" shape-rendering="auto">0</text>
<text x="290" y="453.9" font-family="Liberation Sans, sans-serif" font-size="11.5" fill="#b4b4b4" shape-rendering="auto">3</text>
<text x="290" y="465.9" font-family="Liberation Sans, sans-serif" font-size="11.5" fill="#b4b4b4" shape-rendering="auto">5</text>
<text x="290" y="477.9" font-family="Liberation Sans, sans-serif" font-size="11.5" fill="#b4b4b4" shape-rendering="auto">0</text>
<text x="290" y="511.3" font-family="Liberation Sans, sans-serif" font-size="11.5" fill="#b4b4b4" shape-rendering="auto">4</text>
<text x="290" y="523.3" font-family="Liberation Sans, sans-serif" font-size="11.5" fill="#b4b4b4" shape-rendering="auto">0</text>
<text x="290" y="535.3" font-family="Liberation Sans, sans-serif" font-size="11.5" fill="#b4b4b4" shape-rendering="auto">0</text>
<text x="290" y="568.7" font-family="Liberation Sans, sans-serif" font-size="11.5" fill="#b4b4b4" shape-rendering="auto">4</text>
<text x="290" y="580.7" font-family="Liberation Sans, sans-serif" font-size="11.5" fill="#b4b4b4" shape-rendering="auto">5</text>
<text x="290" y="592.7" font-family="Liberation Sans, sans-serif" font-size="11.5" fill="#b4b4b4" shape-rendering="auto">0</text>
<text x="290" y="626.1" font-family="Liberation Sans, sans-serif" font-size="11.5" fill="#b4b4b4" shape-rendering="auto">5</text>
<text x="290" y="638.1" font-family="Liberation Sans, sans-serif" font-size="11.5" fill="#b4b4b4" shape-rendering="auto">0</text>
<text x="290" y="650.1" font-family="Liberation Sans, sans-serif" font-size="11.5" fill="#b4b4b4" shape-rendering="auto">0</text>
<text x="290" y="683.5" font-family="Liberation Sans, sans-serif" font-size="11.5" fill="#b4b4b4" shape-rendering="auto">5</text>
<text x="290" y="695.5" font-family="Liberation Sans, sans-serif" font-size="11.5" fill="#b4b4b4" shape-rendering="auto">5</text>
<text x="290" y="707.5" font-family="Liberation Sans, sans-serif" font-size="11.5" fill="#b4b4b4" shape-rendering="auto">0</text>
<text x="290" y="741.0" font-family="Liberation Sans, sans-serif" font-size="11.5" fill="#b4b4b4" shape-rendering="auto">6</text>
<text x="290" y="753.0" font-family="Liberation Sans, sans-serif" font-size="11.5" fill="#b4b4b4" shape-rendering="auto">0</text>
<text x="290" y="765.0" font-family="Liberation Sans, sans-serif" font-size="11.5" fill="#b4b4b4" shape-rendering="auto">0</text>
<text x="290" y="798.4" font-family="Liberation Sans, sans-serif" font-size="11.5" fill="#b4b4b4" shape-rendering="auto">6</text>
<text x="290" y="810.4" font-family="Liberation Sans, sans-serif" font-size="11.5" fill="#b4b4b4" shape-rendering="auto">5</text>
<text x="290" y="822.4" font-family="Liberation Sans, sans-serif" font-size="11.5" fill="#b4b4b4" shape-rendering="auto">0</text>
<text x="290" y="855.8" font-family="Liberation Sans, sans-serif" font-size="11.5" fill="#b4b4b4" shape-rendering="auto">7</text>
<text x="290" y="867.8" font-family="Liberation Sans, sans-serif" font-size="11.5" fill="#b4b4b4" shape-rendering="auto">0</text>
<text x="290" y="879.8" font-family="Liberation Sans, sans-serif" font-size="11.5" fill="#b4b4b4" shape-rendering="auto">0</text>
<text x="290" y="913.2" font-family="Liberation Sans, sans-serif" font-size="11.5" fill="#b4b4b4" shape-rendering="auto">7</text>
<text x="290" y="925.2" font-family="Liberation Sans, sans-serif" font-size="11.5" fill="#b4b4b4" shape-rendering="auto">5</text>
<text x="290" y="937.2" font-family="Liberation Sans, sans-serif" font-size="11.5" fill="#b4b4b4" shape-rendering="auto">0</text>
<text x="290" y="970.6" font-family="Liberation Sans, sans-serif" font-size="11.5" fill="#b4b4b4" shape-rendering="auto">8</text>
<text x="290" y="982.6" font-family="Liberation Sans, sans-serif" font-size="11.5" fill="#b4b4b4" shape-rendering="auto">0</text>
<text x="290" y="994.6" font-family="Liberation Sans, sans-serif" font-size="11.5" fill="#b4b4b4" shape-rendering="auto">0</text>
<text x="290" y="1028.0" font-family="Liberation Sans, sans-serif" font-size="11.5" fill="#b4b4b4" shape-rendering="auto">8</text>
<text x="290" y="1040.0" font-family="Liberation Sans, sans-serif" font-size="11.5" fill="#b4b4b4" shape-rendering="auto">5</text>
<text x="290" y="1052.0" font-family="Liberation Sans, sans-serif" font-size="11.5" fill="#b4b4b4" shape-rendering="auto">0</text>
</svg></div>
<div class="abs" id="paste"><!--ART--><svg class="abs" style="left:0;top:0" width="1204" height="908" viewBox="307 107 1204 908">
<defs>
<linearGradient id="sky" x1="0" y1="205" x2="0" y2="516" gradientUnits="userSpaceOnUse"><stop offset="0" stop-color="#42547f"/><stop offset="0.35" stop-color="#4c6193"/><stop offset="0.75" stop-color="#5f78b0"/><stop offset="1" stop-color="#6c86bb"/></linearGradient>
<linearGradient id="sea" x1="0" y1="516" x2="0" y2="860" gradientUnits="userSpaceOnUse"><stop offset="0" stop-color="#4e6b80"/><stop offset="0.3" stop-color="#536f86"/><stop offset="1" stop-color="#5e7993"/></linearGradient>
<clipPath id="cv"><rect x="327" y="205" width="885" height="796"/></clipPath>
<filter id="b6" x="-30%" y="-30%" width="160%" height="160%"><feGaussianBlur stdDeviation="9"/></filter>
<filter id="b2" x="-20%" y="-20%" width="140%" height="140%"><feGaussianBlur stdDeviation="1.6"/></filter>
<filter id="b3" x="-20%" y="-20%" width="140%" height="140%"><feGaussianBlur stdDeviation="3"/></filter>
<filter id="brush" x="-10%" y="-10%" width="120%" height="120%"><feTurbulence type="fractalNoise" baseFrequency="0.035 0.11" numOctaves="3" seed="7" result="n"/><feColorMatrix in="n" type="matrix" values="0 0 0 0 0  0 0 0 0 0  0 0 0 0 0  0 0 0 2.8 -1.0" result="a"/><feGaussianBlur in="SourceGraphic" stdDeviation="4" result="sg"/><feComposite in="sg" in2="a" operator="in" result="c"/><feGaussianBlur in="c" stdDeviation="0.7"/></filter>
</defs>
<g id="artall">
<g clip-path="url(#cv)">
<rect x="327" y="205" width="885" height="311" fill="url(#sky)"/>
<rect x="327" y="516" width="885" height="485" fill="url(#sea)"/>
<!-- soft lighter water -->
<g filter="url(#b6)" fill="#6783a0" opacity="0.32">
<ellipse cx="470" cy="640" rx="95" ry="50"/><ellipse cx="545" cy="585" rx="40" ry="14"/>
<ellipse cx="960" cy="640" rx="80" ry="35"/><ellipse cx="1100" cy="700" rx="90" ry="40"/>
</g>
<!-- foam -->
<g filter="url(#brush)" fill="#b6cbd9">
<path opacity="0.95" d="M377,727 L420,734 L462,746 L470,790 L450,818 L420,823 L392,813 L372,782 L370,740 Z"/>
<path opacity="0.6" d="M370,822 L385,838 L402,865 L406,893 L370,893 Z"/>
<path opacity="0.95" d="M868,726 L888,706 L927,690 L962,700 L1000,733 L1029,762 L1005,812 L960,795 L915,768 L868,758 Z"/>
</g>
<g filter="url(#b6)" fill="#7f9cb3" opacity="0.5"><ellipse cx="415" cy="775" rx="36" ry="38"/><ellipse cx="945" cy="748" rx="60" ry="36"/></g>
<!-- rocks -->
<g fill="#44485b">
<path d="M327,416 C345,421 359,440 361,470 L361,540 C362,562 368,580 373,596 L389,608 L369,607 C360,625 342,634 327,640 Z"/>
<path d="M1212,524 C1196,532 1176,545 1180,560 C1186,575 1194,590 1196,602 L1200,620 L1195,632 L1212,649 Z"/>
<path d="M327,694 L379,672 L374,702 L371,752 L370,890 L416,899 L422,821 L495,824 L550,834 L512,748 L547,740 L569,749 L570,701 L600,698 L700,760 L872,752 L902,757 L922,762 L940,780 L980,800 L1005,809 L1031,764 L1090,760 L1167,754 L1175,785 L1188,826 L1202,854 L1189,871 L1212,905 L1212,1001 L327,1001 Z"/>
</g>
</g>
<!-- figure -->
<g id="fig">
<!-- thin strand -->
<path d="M671,463 C667,472 664,478 660,483 C652,492 645,498 636.7,505 C630,513 625,521 620,530 C613,540 608,549 603,558 C597,568 592,578 588,588 C584,597 582,605 580,613 L577.5,627" fill="none" stroke="#2d2929" stroke-width="4.8"/>
<!-- hair brown -->
<path fill="#433838" d="M738,349 L762,359 L778,380 L793,433 L799,470 L802,516 L806,560 L800,600 L790,650 L760,670 L700,690 L640,700 L600,690 L588,655 L587,638 L588,622 L597,597 L607,573 L618,550 L632,522 L648,490 L654,465 L660,438 L672,398 L690,372 L700,364 Z"/>
<path d="M671,463 C667,472 664,478 660,483 C652,492 645,498 636.7,505 L630,514" fill="none" stroke="#2d2929" stroke-width="4.8"/>
<!-- dark body -->
<path fill="#2d2929" d="M713,387 L767,397 L787,440 L770,480 L750,517 L795,539 L817,525 L813,560 L816,590 L819,620 L824,647 L836,669 L849,693 L860,720 C865,732 868,740 868,746 C868,754 864,762 858,771 L848,784 C846,790 846,800 848,811 C847,820 845,828 842,834 C838,842 828,845 820,840 L813,833 L814,860 L812,885 L820,960 L825,1015 L539,1015 L539,1002 C540,992 541,984 542,976 L551,947 L564,913 L580,880 L596,847 L607,820 C603,815 600,814 598,813 C592,812 588,809 586,806 C582,800 581,796 582,790 L590,768 L606,745 L615,715 L640,690 L653,660 L660,630 L662,608 L643,603 L645,587 L650,563 L653,550 L657,530 L660,507 L663,497 L670,480 L690,445 Z"/>
<!-- brown strands over dark -->
<path fill="#433838" d="M765,563 L800,572 L797,600 L787,640 L778,662 L745,662 L752,620 L760,590 Z"/>
<path d="M661,551 L655,560 C645,585 630,610 620,629 L640,600 Z" fill="#2d2929"/>
<path d="M754,552 C737,582 703,628 692,641 C686,650 682,660 679.7,666 C676,676 675,682 676.5,686 C678,692 684,696 695,699" fill="none" stroke="#4a3e3e" stroke-width="8.5"/>
<path d="M665,814 L642,888" stroke="#4a3e3e" stroke-width="6" fill="none"/>
<path d="M609,962 L592,1015" stroke="#433838" stroke-width="14" stroke-linecap="round" fill="none"/>
<path d="M679,938 L666,1015" stroke="#433838" stroke-width="21" stroke-linecap="round" fill="none"/>
<path d="M784,1003 L788,1015" stroke="#433838" stroke-width="17" stroke-linecap="round" fill="none"/>
<path d="M631,771 L637,760 L641,768 Z" fill="#5b6478"/>
<!-- red ears -->
<g fill="#883634">
<path d="M665.8,318.8 C672.0,318.8 680.3,322.1 685.3,326.4 C690.3,330.7 693.7,338.6 695.7,344.4 C697.7,350.2 697.9,355.5 697.5,361.1 C697.1,366.7 696.1,372.9 693.6,377.8 C691.1,382.7 686.2,387.6 682.5,390.3 C678.8,393.0 675.8,394.0 671.4,393.8 C667.0,393.5 660.5,391.6 656.1,388.9 C651.7,386.2 647.7,382.4 645.0,377.8 C642.3,373.2 640.5,367.1 639.7,361.1 C638.9,355.1 638.8,347.5 640.1,341.7 C641.5,335.9 643.5,330.2 647.8,326.4 C652.1,322.6 659.5,318.8 665.8,318.8 Z"/>
<path d="M807.5,327.8 C814.9,328.5 824.0,334.3 828.3,338.9 C832.6,343.5 833.0,350.1 833.2,355.6 C833.4,361.2 831.8,366.9 829.7,372.2 C827.6,377.5 822.1,381.9 820.7,387.5 C819.3,393.1 822.5,399.8 821.4,405.6 C820.3,411.4 818.3,417.7 814.4,422.2 C810.5,426.7 803.1,431.7 797.8,432.6 C792.5,433.5 786.7,430.9 782.5,427.8 C778.3,424.7 775.6,419.0 772.8,413.9 C770.0,408.8 768.3,402.8 765.8,397.2 C763.2,391.6 759.2,385.7 757.5,380.6 C755.8,375.5 754.6,371.6 755.8,366.7 C756.9,361.8 759.7,356.7 764.4,351.4 C769.1,346.1 776.7,338.6 783.9,334.7 C791.1,330.8 800.1,327.1 807.5,327.8 Z"/>
<path d="M607,634 C625,632 645,655 653,680 C657,692 650,700 645,705 C652,715 650,728 636,732 C620,735 604,720 596,700 C586,675 584,640 607,634 Z"/>
<path d="M757,648 C775,648 785,662 782,685 C778,715 765,745 742,750 C728,750 722,730 725,712 C720,705 720,695 726,686 C732,668 742,650 757,648 Z"/>
</g>
<!-- skin -->
<rect x="801" y="547" width="13" height="47" rx="6.5" fill="#c9978d"/>
<rect x="593" y="774" width="11" height="25" rx="5.5" fill="#c9978d"/>
<rect x="820" y="788" width="21" height="53" rx="10.5" fill="#c9978d" transform="rotate(4 830 815)"/>
<!-- red lines -->
<g fill="none" stroke="#a23b37" stroke-width="2.4" stroke-linecap="round">
<path d="M647,766 C635,800 620,840 614,877"/>
<path d="M735,772 C738,800 740,840 740,874"/>
<path d="M807,641 L821,653 M820,647 L813,663" stroke-width="2.8"/>
<path d="M818,674 L846,701 M837,683 L826,699" stroke-width="2.8"/>
<path d="M834,720 L853,731 M849,713 L836,738" stroke-width="2.8"/>
</g>
<circle cx="647.5" cy="765" r="3" fill="#a23b37"/>
<path d="M730,779 L735,767 L739,779 Z" fill="#a23b37"/>
</g>
</g>
<!-- cursor -->
<g transform="translate(756,705)">
<path d="M4,4 L10,10" stroke="#fff" stroke-width="4.2" stroke-linecap="round"/>
<path d="M4,4 L10,10" stroke="#000" stroke-width="2.2" stroke-linecap="round"/>
<circle cx="0" cy="0" r="5.6" fill="#fff" stroke="#000" stroke-width="1.2"/>
<path d="M-3,0 H3 M0,-3 V3" stroke="#000" stroke-width="1.6"/>
</g>
</svg>
<!--/ART--></div>
<div class="abs" id="vscroll">
<svg class="abs" style="left:3px;top:5px" width="11" height="8" viewBox="0 0 11 8"><path d="M1.5,6 L5.5,2 L9.5,6" fill="none" stroke="#7a7a7a" stroke-width="1.2"/></svg>
<div class="abs" style="left:2px;top:303px;width:12px;height:294px;background:#6b6b6b"></div>
<svg class="abs" style="left:3px;top:912px" width="11" height="8" viewBox="0 0 11 8"><path d="M1.5,2 L5.5,6 L9.5,2" fill="none" stroke="#7a7a7a" stroke-width="1.2"/></svg>
</div>
<div class="abs" id="status">
<div class="abs" style="left:0;top:0;width:48px;height:17px;background:#454545;font-size:11px;color:#e8e8e8;line-height:17px;padding-left:1px;letter-spacing:-0.1px">114.81%</div>
<div class="abs" style="left:48px;top:0;width:184px;height:17px;background:#555;font-size:11px;color:#dadada;line-height:17px;padding-left:8px;white-space:nowrap;letter-spacing:-0.1px">1600 像素 x 983 像素 (300 ppi)</div>
<svg class="abs" style="left:219px;top:3px" width="30" height="11" viewBox="0 0 30 11" fill="none" stroke-width="1.2"><path d="M3,1 L7,5.5 L3,10" stroke="#d8d8d8"/><path d="M25,2 L22,5.5 L25,9" stroke="#808080"/></svg>
<div class="abs" style="left:617px;top:3px;width:285px;height:11px;background:#6b6b6b"></div>
<svg class="abs" style="left:1207px;top:3px" width="8" height="11" viewBox="0 0 8 11" fill="none" stroke-width="1.2"><path d="M2,2 L5,5.5 L2,9" stroke="#808080"/></svg>
</div>
<div class="abs" style="left:1531px;top:61px;width:197px;height:11px;background:#434343"></div>
<svg class="abs" style="left:1553px;top:63px" width="10" height="8" viewBox="0 0 10 8" fill="none" stroke="#e0e0e0" stroke-width="1.2"><path d="M4,0.8 L1.2,4 L4,7.2 M8.4,0.8 L5.6,4 L8.4,7.2"/></svg>
<div class="abs" id="strip"><div class="abs" style="left:37px;top:0;width:1px;height:960px;background:#474747"></div>
<div class="abs" style="left:0;top:41px;width:38px;height:1px;background:#424242"></div>
<div class="abs" style="left:0;top:110px;width:38px;height:1px;background:#424242"></div>
<div class="abs" style="left:0;top:151px;width:38px;height:1px;background:#424242"></div>
<div class="abs" style="left:0;top:248px;width:38px;height:1px;background:#424242"></div>
<div class="abs" style="left:0;top:290px;width:38px;height:1px;background:#424242"></div>
<div class="abs" style="left:0;top:330px;width:38px;height:1px;background:#424242"></div>
<div class="abs" style="left:12px;top:3px;width:15px;height:4px;background:repeating-linear-gradient(90deg,#474747 0 1px,transparent 1px 2px)"></div>
<div class="abs" style="left:12px;top:47px;width:15px;height:4px;background:repeating-linear-gradient(90deg,#474747 0 1px,transparent 1px 2px)"></div>
<div class="abs" style="left:12px;top:116px;width:15px;height:4px;background:repeating-linear-gradient(90deg,#474747 0 1px,transparent 1px 2px)"></div>
<div class="abs" style="left:12px;top:157px;width:15px;height:4px;background:repeating-linear-gradient(90deg,#474747 0 1px,transparent 1px 2px)"></div>
<div class="abs" style="left:12px;top:253px;width:15px;height:4px;background:repeating-linear-gradient(90deg,#474747 0 1px,transparent 1px 2px)"></div>
<div class="abs" style="left:12px;top:295px;width:15px;height:4px;background:repeating-linear-gradient(90deg,#474747 0 1px,transparent 1px 2px)"></div>
<svg class="abs" style="left:0;top:0" width="38" height="340" viewBox="1530 72 38 340" fill="none" stroke="#d6d6d6" stroke-width="1.4" font-family="Liberation Sans, sans-serif">
<circle cx="1548" cy="95.5" r="7.6"/><path d="M1548,94 V100" stroke-width="1.8"/><circle cx="1548" cy="91" r="1.1" fill="#d6d6d6" stroke="none"/>
<text x="1540.5" y="143" font-size="17" fill="#d6d6d6" stroke="none">A</text><path d="M1554.5,129 V145" stroke-width="1.1"/>
<text x="1542.5" y="171" font-size="17" fill="#d6d6d6" stroke="none" font-weight="bold">¶</text>
<text x="1539.5" y="212.5" font-size="20" fill="#d6d6d6" stroke="none" font-family="Liberation Serif, serif" font-style="italic" font-weight="bold">A</text>
<g stroke-width="1.1"><path d="M1540,240.5 H1556 M1540,246.5 H1556 M1540,252.5 H1556"/><circle cx="1545" cy="240.5" r="1.9" fill="#535353"/><circle cx="1552" cy="246.5" r="1.9" fill="#535353"/><circle cx="1546" cy="252.5" r="1.9" fill="#535353"/></g>
<circle cx="1548" cy="274.5" r="6.6"/><path d="M1552.7,269.8 A6.6,6.6 0 0 1 1543.3,279.2 Z" fill="#d6d6d6" stroke="none"/>
<g stroke-width="1.2"><path d="M1543,308 H1540.5 V296 H1553 V298"/><rect x="1543" y="298" width="12.5" height="12"/><path d="M1549.5,298 V304 L1551.2,302.6 L1553,304 V298 Z" fill="#d6d6d6" stroke="none"/></g>
<g stroke="none"><circle cx="1548" cy="339.5" r="5" fill="#bdbdbd"/><circle cx="1544.5" cy="345.5" r="5" fill="#e2e2e2"/><circle cx="1551.5" cy="345.5" r="5" fill="#cfcfcf"/><circle cx="1548" cy="343.5" r="1.8" fill="#555"/></g>
<g stroke-width="1.1"><rect x="1542.5" y="377" width="3" height="3"/><rect x="1542.5" y="382.5" width="3" height="3"/><rect x="1542" y="388" width="4" height="4" fill="#d6d6d6"/><path d="M1550.5,391 C1556,388 1556,381 1551,379" stroke-width="1.5"/><path d="M1549.5,376.5 L1549.8,381.8 L1554.6,379.8 Z" fill="#d6d6d6" stroke="none"/></g>
</svg></div>
<div class="abs" id="rightcol"><div class="abs tabbar" style="left:0;top:0;width:158px;height:28px"></div>
<div class="abs" style="left:0;top:0;width:40px;height:29px;background:#535353;border-right:1px solid #3a3a3a"></div>
<div class="abs" style="left:9px;top:5px;font-size:11.5px;line-height:16px;color:#f0f0f0;font-weight:bold;white-space:nowrap">颜色</div>
<div class="abs" style="left:48px;top:5px;font-size:11.5px;line-height:16px;color:#bdbdbd;font-weight:normal;white-space:nowrap">色板</div>
<div class="abs" style="left:88px;top:5px;font-size:11.5px;line-height:16px;color:#bdbdbd;font-weight:normal;white-space:nowrap">渐变</div>
<div class="abs" style="left:128px;top:5px;font-size:11.5px;line-height:16px;color:#bdbdbd;font-weight:normal;white-space:nowrap">图案</div>
<div class="abs" style="left:79px;top:0;width:1px;height:28px;background:#3a3a3a"></div>
<div class="abs" style="left:119px;top:0;width:1px;height:28px;background:#3a3a3a"></div>
<div class="abs" style="left:20px;top:50px;width:19px;height:19px;background:#fff"></div>
<div class="abs" style="left:8px;top:38px;width:22px;height:22px;background:#463a3a;border:1px solid #7a7a7a;box-shadow:inset 0 0 0 1px #f4f4f4"></div>
<div class="abs" style="left:46px;top:42.5px;font-size:10.5px;line-height:14px;color:#d0d0d0">H</div>
<div class="abs" style="left:46px;top:68.5px;font-size:10.5px;line-height:14px;color:#d0d0d0">S</div>
<div class="abs" style="left:46px;top:94.5px;font-size:10.5px;line-height:14px;color:#d0d0d0">B</div>
<div class="abs" style="left:62px;top:43px;width:110px;height:6px;background:linear-gradient(90deg,#f00 0%,#ff0 16.6%,#0f0 33.3%,#0ff 50%,#00f 66.6%,#f0f 83.3%,#f00 100%)"></div>
<div class="abs" style="left:62px;top:69px;width:110px;height:6px;background:linear-gradient(90deg,#474747,#470000)"></div>
<div class="abs" style="left:62px;top:95px;width:110px;height:6px;background:linear-gradient(90deg,#000,#ffd4d4)"></div>
<svg class="abs" style="left:58.5px;top:49.5px" width="13" height="11" viewBox="0 0 13 11"><path d="M6.5,0.8 L11.6,7 V8.4 Q11.6,10.2 9.8,10.2 H3.2 Q1.4,10.2 1.4,8.4 V7 Z" fill="#f2f2f2" stroke="#3a3a3a" stroke-width="0.8"/></svg>
<svg class="abs" style="left:76.5px;top:75.5px" width="13" height="11" viewBox="0 0 13 11"><path d="M6.5,0.8 L11.6,7 V8.4 Q11.6,10.2 9.8,10.2 H3.2 Q1.4,10.2 1.4,8.4 V7 Z" fill="#f2f2f2" stroke="#3a3a3a" stroke-width="0.8"/></svg>
<svg class="abs" style="left:85.5px;top:101.5px" width="13" height="11" viewBox="0 0 13 11"><path d="M6.5,0.8 L11.6,7 V8.4 Q11.6,10.2 9.8,10.2 H3.2 Q1.4,10.2 1.4,8.4 V7 Z" fill="#f2f2f2" stroke="#3a3a3a" stroke-width="0.8"/></svg>
<div class="abs" style="left:13.299999999999955px;top:125px;width:228px;height:228px;border-radius:50%;background:conic-gradient(from 90deg,#f00,#f0f,#00f,#0ff,#0f0,#ff0,#f00);-webkit-mask:radial-gradient(circle,transparent 94px,#000 95px,#000 113.5px,transparent 114.5px);mask:radial-gradient(circle,transparent 94px,#000 95px,#000 113.5px,transparent 114.5px)"></div>
<svg class="abs" style="left:0;top:118px" width="158" height="240" viewBox="1570 190 158 240">
<defs><linearGradient id="tg1" x1="1650" y1="311" x2="1791" y2="311" gradientUnits="userSpaceOnUse"><stop offset="0" stop-color="#808080"/><stop offset="1" stop-color="#ff0000"/></linearGradient>
<linearGradient id="tg2" x1="1650" y1="230" x2="1720.5" y2="352" gradientUnits="userSpaceOnUse"><stop offset="0" stop-color="#fff" stop-opacity="1"/><stop offset="1" stop-color="#fff" stop-opacity="0"/></linearGradient>
<linearGradient id="tg3" x1="1650" y1="392" x2="1720.5" y2="270" gradientUnits="userSpaceOnUse"><stop offset="0" stop-color="#000" stop-opacity="1"/><stop offset="1" stop-color="#000" stop-opacity="0"/></linearGradient>
<clipPath id="tri"><path d="M1650,229.6 L1791,311 L1650,392.4 Z"/></clipPath></defs>
<g clip-path="url(#tri)"><rect x="1650" y="229" width="142" height="164" fill="#ff0000"/><rect x="1650" y="229" width="142" height="164" fill="url(#tg2)"/><rect x="1650" y="229" width="142" height="164" fill="url(#tg3)"/></g>
<circle cx="1656.3" cy="352.6" r="4.6" fill="none" stroke="#000" stroke-width="2.6"/><circle cx="1656.3" cy="352.6" r="4.6" fill="none" stroke="#fff" stroke-width="1.2"/>
</svg>
<div class="abs" style="left:0;top:479px;width:158px;height:2px;background:#404040"></div>
<div class="abs tabbar" style="left:0;top:481px;width:158px;height:28px"></div>
<div class="abs" style="left:0;top:481px;width:40px;height:29px;background:#535353;border-right:1px solid #3a3a3a"></div>
<div class="abs" style="left:9px;top:486px;font-size:11.5px;line-height:16px;color:#f0f0f0;font-weight:bold;white-space:nowrap">图层</div>
<div class="abs" style="left:4px;top:519px;width:85px;height:21px;background:#474747;border:1px solid #3f3f3f;border-radius:3px"></div>
<svg class="abs" style="left:10px;top:523px" width="13" height="13" viewBox="0 0 13 13" fill="none" stroke="#e0e0e0" stroke-width="1.5"><circle cx="5" cy="5" r="3.6"/><path d="M7.8,7.8 L11.5,11.5" stroke-width="2"/></svg>
<div class="abs serif" style="left:27px;top:522px;font-size:12px;line-height:16px;color:#a8a8a8;letter-spacing:1px;white-space:nowrap">类型</div>
<svg class="abs" style="left:77px;top:527px" width="9" height="6" viewBox="0 0 9 6" fill="none" stroke="#bdbdbd" stroke-width="1.1"><path d="M1,1 L4.5,4.5 L8,1"/></svg>
<svg class="abs" style="left:104px;top:522px" width="54" height="13" viewBox="1674 594 54 13" fill="none" stroke="#dcdcdc" stroke-width="1.1"><rect x="1675" y="595.5" width="11" height="9"/><path d="M1676.5,603.2 L1679,599 L1681,601.5 L1682.7,599.8 L1685,603.2 Z" fill="#dcdcdc" stroke="none"/><circle cx="1705.5" cy="600.5" r="4.8"/><path d="M1708.9,597.1 A4.8,4.8 0 0 1 1702.1,603.9 Z" fill="#dcdcdc" stroke="none"/><path d="M1726,596 H1734 M1730,596 V605" stroke-width="1.6"/></svg>
<div class="abs" style="left:4px;top:548px;width:117px;height:21px;background:#474747;border:1px solid #3f3f3f;border-radius:3px"></div>
<div class="abs serif" style="left:12px;top:551px;font-size:12px;line-height:16px;color:#a8a8a8;letter-spacing:1px;white-space:nowrap">正常</div>
<svg class="abs" style="left:109px;top:557px" width="9" height="6" viewBox="0 0 9 6" fill="none" stroke="#bdbdbd" stroke-width="1.1"><path d="M1,1 L4.5,4.5 L8,1"/></svg>
<div class="abs serif" style="left:126px;top:549px;font-size:12px;line-height:16px;color:#a8a8a8;letter-spacing:0.6px;white-space:nowrap">不透明度</div>
<div class="abs serif" style="left:7px;top:578px;font-size:12px;line-height:16px;color:#a0a0a0;white-space:nowrap">锁定:</div>
<svg class="abs" style="left:40px;top:576px" width="118" height="20" viewBox="1610 648 118 20" fill="none" stroke="#e0e0e0" stroke-width="1.2">
<rect x="1614.5" y="653" width="10" height="10" stroke-width="1"/><path d="M1614.5,653 h3.3 v3.3 h-3.3 z M1621.2,653 h3.3 v3.3 h-3.3 z M1617.8,656.3 h3.4 v3.4 h-3.4 z M1614.5,659.7 h3.3 v3.3 h-3.3 z M1621.2,659.7 h3.3 v3.3 h-3.3 z" fill="#e0e0e0" stroke="none"/>
<path d="M1647,652 L1641.5,659" stroke-width="2.8" stroke-linecap="round"/><path d="M1640.2,659.2 C1638.6,659.6 1637.4,661.2 1636.6,663.8 C1639.2,664 1641.4,663.2 1642.2,661 Z" fill="#e0e0e0" stroke="none"/>
<path d="M1663,652.5 V663.5 M1657.5,658 H1668.5" stroke-width="1.1"/><path d="M1661,654.3 L1663,651.8 L1665,654.3 M1661,661.7 L1663,664.2 L1665,661.7 M1659.3,656 L1656.8,658 L1659.3,660 M1666.7,656 L1669.2,658 L1666.7,660" stroke-width="1.1"/>
<path d="M1682,651.5 V662.5 H1691.5 M1679.5,654 H1689 V665" stroke-width="1.2"/><path d="M1686,657 L1691,652" stroke-width="1"/>
<rect x="1703.5" y="657" width="9" height="7.5" fill="#e0e0e0" stroke="none"/><path d="M1705.5,657 V654.8 Q1705.5,652 1708,652 Q1710.5,652 1710.5,654.8 V657" stroke-width="1.3"/>
</svg>
<div class="abs serif" style="left:150px;top:578px;font-size:12px;line-height:16px;color:#a0a0a0;white-space:nowrap">填充</div>
<div class="abs" style="left:0;top:542px;width:158px;height:1px;background:#484848"></div><div class="abs" style="left:0;top:571px;width:158px;height:1px;background:#484848"></div><div class="abs" style="left:29px;top:602px;width:1px;height:332px;background:#474747"></div>
<div class="abs" style="left:0;top:631px;width:158px;height:1px;background:#474747"></div>
<svg class="abs" style="left:8.5px;top:613px" width="14.5" height="10" viewBox="0 0 16 11"><path d="M0.6,5.5 C3,1.6 5.6,0.6 8,0.6 C10.4,0.6 13,1.6 15.4,5.5 C13,9.4 10.4,10.4 8,10.4 C5.6,10.4 3,9.4 0.6,5.5 Z" fill="#e4e4e4"/><circle cx="8" cy="5.2" r="3" fill="#535353"/><circle cx="8" cy="5.2" r="1.5" fill="#e4e4e4"/></svg>
<div class="abs" style="left:34px;top:607px;width:32px;height:20px;border:1px solid #2e2e2e;background-color:#fff;background-image:linear-gradient(45deg,#ccc 25%,transparent 25%,transparent 75%,#ccc 75%),linear-gradient(45deg,#ccc 25%,transparent 25%,transparent 75%,#ccc 75%);background-size:8px 8px;background-position:0 0,4px 4px;overflow:hidden"><div class="abs" style="left:14px;top:16px;width:2px;height:2px;background:#333"></div></div>
<div class="abs serif" style="left:76px;top:610px;font-size:12px;line-height:16px;color:#c8c8c8;white-space:nowrap;letter-spacing:0.3px">图层 <span style="font-family:Liberation Sans,sans-serif;font-size:11.5px;letter-spacing:0">122</span></div>
<div class="abs" style="left:0;top:661px;width:158px;height:1px;background:#474747"></div>
<svg class="abs" style="left:8.5px;top:643px" width="14.5" height="10" viewBox="0 0 16 11"><path d="M0.6,5.5 C3,1.6 5.6,0.6 8,0.6 C10.4,0.6 13,1.6 15.4,5.5 C13,9.4 10.4,10.4 8,10.4 C5.6,10.4 3,9.4 0.6,5.5 Z" fill="#e4e4e4"/><circle cx="8" cy="5.2" r="3" fill="#535353"/><circle cx="8" cy="5.2" r="1.5" fill="#e4e4e4"/></svg>
<div class="abs" style="left:34px;top:637px;width:32px;height:20px;border:1px solid #2e2e2e;background-color:#fff;background-image:linear-gradient(45deg,#ccc 25%,transparent 25%,transparent 75%,#ccc 75%),linear-gradient(45deg,#ccc 25%,transparent 25%,transparent 75%,#ccc 75%);background-size:8px 8px;background-position:0 0,4px 4px;overflow:hidden"></div>
<div class="abs serif" style="left:76px;top:640px;font-size:12px;line-height:16px;color:#c8c8c8;white-space:nowrap;letter-spacing:0.3px">图层 <span style="font-family:Liberation Sans,sans-serif;font-size:11.5px;letter-spacing:0">121</span></div>
<div class="abs" style="left:0;top:691px;width:158px;height:1px;background:#474747"></div>
<svg class="abs" style="left:8.5px;top:673px" width="14.5" height="10" viewBox="0 0 16 11"><path d="M0.6,5.5 C3,1.6 5.6,0.6 8,0.6 C10.4,0.6 13,1.6 15.4,5.5 C13,9.4 10.4,10.4 8,10.4 C5.6,10.4 3,9.4 0.6,5.5 Z" fill="#e4e4e4"/><circle cx="8" cy="5.2" r="3" fill="#535353"/><circle cx="8" cy="5.2" r="1.5" fill="#e4e4e4"/></svg>
<div class="abs" style="left:34px;top:667px;width:32px;height:20px;border:1px solid #2e2e2e;background-color:#fff;background-image:linear-gradient(45deg,#ccc 25%,transparent 25%,transparent 75%,#ccc 75%),linear-gradient(45deg,#ccc 25%,transparent 25%,transparent 75%,#ccc 75%);background-size:8px 8px;background-position:0 0,4px 4px;overflow:hidden"><div class="abs" style="left:14px;top:6px;width:2px;height:2px;background:#b04040"></div><div class="abs" style="left:15px;top:10px;width:2px;height:2px;background:#b04040"></div></div>
<div class="abs serif" style="left:76px;top:670px;font-size:12px;line-height:16px;color:#c8c8c8;white-space:nowrap;letter-spacing:0.3px">图层 <span style="font-family:Liberation Sans,sans-serif;font-size:11.5px;letter-spacing:0">120</span></div>
<div class="abs" style="left:0;top:721px;width:158px;height:1px;background:#474747"></div>
<svg class="abs" style="left:8.5px;top:703px" width="14.5" height="10" viewBox="0 0 16 11"><path d="M0.6,5.5 C3,1.6 5.6,0.6 8,0.6 C10.4,0.6 13,1.6 15.4,5.5 C13,9.4 10.4,10.4 8,10.4 C5.6,10.4 3,9.4 0.6,5.5 Z" fill="#e4e4e4"/><circle cx="8" cy="5.2" r="3" fill="#535353"/><circle cx="8" cy="5.2" r="1.5" fill="#e4e4e4"/></svg>
<div class="abs" style="left:34px;top:697px;width:32px;height:20px;border:1px solid #2e2e2e;background-color:#fff;background-image:linear-gradient(45deg,#ccc 25%,transparent 25%,transparent 75%,#ccc 75%),linear-gradient(45deg,#ccc 25%,transparent 25%,transparent 75%,#ccc 75%);background-size:8px 8px;background-position:0 0,4px 4px;overflow:hidden"></div>
<div class="abs serif" style="left:76px;top:700px;font-size:12px;line-height:16px;color:#c8c8c8;white-space:nowrap;letter-spacing:0.3px">图层 <span style="font-family:Liberation Sans,sans-serif;font-size:11.5px;letter-spacing:0">124</span></div>
<div class="abs" style="left:30px;top:722px;width:130px;height:30px;background:#6b6b6b"></div>
<div class="abs" style="left:0;top:751px;width:158px;height:1px;background:#474747"></div>
<svg class="abs" style="left:8.5px;top:733px" width="14.5" height="10" viewBox="0 0 16 11"><path d="M0.6,5.5 C3,1.6 5.6,0.6 8,0.6 C10.4,0.6 13,1.6 15.4,5.5 C13,9.4 10.4,10.4 8,10.4 C5.6,10.4 3,9.4 0.6,5.5 Z" fill="#e4e4e4"/><circle cx="8" cy="5.2" r="3" fill="#535353"/><circle cx="8" cy="5.2" r="1.5" fill="#e4e4e4"/></svg>
<svg class="abs" style="left:40px;top:733px" width="8" height="10" viewBox="0 0 8 10" fill="none" stroke="#dcdcdc" stroke-width="1.3"><path d="M7,1.2 H3.6 V6.5"/><path d="M0.8,5.6 H6.4 L3.6,9 Z" fill="#dcdcdc" stroke="none"/></svg>
<div class="abs" style="left:50px;top:727px;width:32px;height:20px;border:1px solid #2e2e2e;background-color:#fff;background-image:linear-gradient(45deg,#ccc 25%,transparent 25%,transparent 75%,#ccc 75%),linear-gradient(45deg,#ccc 25%,transparent 25%,transparent 75%,#ccc 75%);background-size:8px 8px;background-position:0 0,4px 4px;overflow:hidden"><div class="abs" style="left:14px;top:6px;width:2px;height:4px;border:1px solid #333"></div></div>
<svg class="abs" style="left:47px;top:724px" width="38" height="26" viewBox="0 0 38 26" fill="none" stroke="#fff" stroke-width="1.3"><path d="M1,6 V1 H12 M26,1 H37 V6 M37,20 V25 H26 M12,25 H1 V20"/></svg>
<div class="abs serif" style="left:92px;top:730px;font-size:12px;line-height:16px;color:#c8c8c8;white-space:nowrap;letter-spacing:0.3px">图层 <span style="font-family:Liberation Sans,sans-serif;font-size:11.5px;letter-spacing:0">123</span></div>
<div class="abs" style="left:0;top:781px;width:158px;height:1px;background:#474747"></div>
<svg class="abs" style="left:8.5px;top:763px" width="14.5" height="10" viewBox="0 0 16 11"><path d="M0.6,5.5 C3,1.6 5.6,0.6 8,0.6 C10.4,0.6 13,1.6 15.4,5.5 C13,9.4 10.4,10.4 8,10.4 C5.6,10.4 3,9.4 0.6,5.5 Z" fill="#e4e4e4"/><circle cx="8" cy="5.2" r="3" fill="#535353"/><circle cx="8" cy="5.2" r="1.5" fill="#e4e4e4"/></svg>
<div class="abs" style="left:34px;top:757px;width:32px;height:20px;border:1px solid #2e2e2e;background-color:#fff;background-image:linear-gradient(45deg,#ccc 25%,transparent 25%,transparent 75%,#ccc 75%),linear-gradient(45deg,#ccc 25%,transparent 25%,transparent 75%,#ccc 75%);background-size:8px 8px;background-position:0 0,4px 4px;overflow:hidden"><div class="abs" style="left:11px;top:6px;width:5px;height:12px;background:#2d2929;clip-path:polygon(60% 0,100% 100%,0 100%,20% 40%)"></div></div>
<div class="abs serif" style="left:76px;top:760px;font-size:12px;line-height:16px;color:#c8c8c8;white-space:nowrap;text-decoration:underline;letter-spacing:0.3px">图层 <span style="font-family:Liberation Sans,sans-serif;font-size:11.5px;letter-spacing:0">119</span></div>
<div class="abs" style="left:0;top:811px;width:158px;height:1px;background:#474747"></div>
<svg class="abs" style="left:8.5px;top:793px" width="14.5" height="10" viewBox="0 0 16 11"><path d="M0.6,5.5 C3,1.6 5.6,0.6 8,0.6 C10.4,0.6 13,1.6 15.4,5.5 C13,9.4 10.4,10.4 8,10.4 C5.6,10.4 3,9.4 0.6,5.5 Z" fill="#e4e4e4"/><circle cx="8" cy="5.2" r="3" fill="#535353"/><circle cx="8" cy="5.2" r="1.5" fill="#e4e4e4"/></svg>
<svg class="abs" style="left:40px;top:793px" width="8" height="10" viewBox="0 0 8 10" fill="none" stroke="#dcdcdc" stroke-width="1.3"><path d="M7,1.2 H3.6 V6.5"/><path d="M0.8,5.6 H6.4 L3.6,9 Z" fill="#dcdcdc" stroke="none"/></svg>
<div class="abs" style="left:50px;top:787px;width:32px;height:20px;border:1px solid #2e2e2e;background-color:#fff;background-image:linear-gradient(45deg,#ccc 25%,transparent 25%,transparent 75%,#ccc 75%),linear-gradient(45deg,#ccc 25%,transparent 25%,transparent 75%,#ccc 75%);background-size:8px 8px;background-position:0 0,4px 4px;overflow:hidden"><div class="abs" style="left:6px;top:9px;width:18px;height:9px;background:#44485b;clip-path:polygon(0 100%,5% 50%,20% 60%,25% 0,35% 40%,60% 20%,80% 50%,100% 40%,100% 100%)"></div></div>
<div class="abs serif" style="left:92px;top:790px;font-size:12px;line-height:16px;color:#c8c8c8;white-space:nowrap;letter-spacing:0.3px">图层 <span style="font-family:Liberation Sans,sans-serif;font-size:11.5px;letter-spacing:0">116</span></div>
<div class="abs" style="left:0;top:841px;width:158px;height:1px;background:#474747"></div>
<svg class="abs" style="left:8.5px;top:823px" width="14.5" height="10" viewBox="0 0 16 11"><path d="M0.6,5.5 C3,1.6 5.6,0.6 8,0.6 C10.4,0.6 13,1.6 15.4,5.5 C13,9.4 10.4,10.4 8,10.4 C5.6,10.4 3,9.4 0.6,5.5 Z" fill="#e4e4e4"/><circle cx="8" cy="5.2" r="3" fill="#535353"/><circle cx="8" cy="5.2" r="1.5" fill="#e4e4e4"/></svg>
<svg class="abs" style="left:40px;top:823px" width="8" height="10" viewBox="0 0 8 10" fill="none" stroke="#dcdcdc" stroke-width="1.3"><path d="M7,1.2 H3.6 V6.5"/><path d="M0.8,5.6 H6.4 L3.6,9 Z" fill="#dcdcdc" stroke="none"/></svg>
<div class="abs" style="left:50px;top:817px;width:32px;height:20px;border:1px solid #2e2e2e;background-color:#fff;background-image:linear-gradient(45deg,#ccc 25%,transparent 25%,transparent 75%,#ccc 75%),linear-gradient(45deg,#ccc 25%,transparent 25%,transparent 75%,#ccc 75%);background-size:8px 8px;background-position:0 0,4px 4px;overflow:hidden"><div class="abs" style="left:5px;top:3px;width:20px;height:6px;background:linear-gradient(#435580,#6882ba)"></div></div>
<div class="abs serif" style="left:92px;top:820px;font-size:12px;line-height:16px;color:#c8c8c8;white-space:nowrap;letter-spacing:0.3px">图层 <span style="font-family:Liberation Sans,sans-serif;font-size:11.5px;letter-spacing:0">115</span></div>
<div class="abs" style="left:0;top:871px;width:158px;height:1px;background:#474747"></div>
<svg class="abs" style="left:8.5px;top:853px" width="14.5" height="10" viewBox="0 0 16 11"><path d="M0.6,5.5 C3,1.6 5.6,0.6 8,0.6 C10.4,0.6 13,1.6 15.4,5.5 C13,9.4 10.4,10.4 8,10.4 C5.6,10.4 3,9.4 0.6,5.5 Z" fill="#e4e4e4"/><circle cx="8" cy="5.2" r="3" fill="#535353"/><circle cx="8" cy="5.2" r="1.5" fill="#e4e4e4"/></svg>
<svg class="abs" style="left:40px;top:853px" width="8" height="10" viewBox="0 0 8 10" fill="none" stroke="#dcdcdc" stroke-width="1.3"><path d="M7,1.2 H3.6 V6.5"/><path d="M0.8,5.6 H6.4 L3.6,9 Z" fill="#dcdcdc" stroke="none"/></svg>
<div class="abs" style="left:50px;top:847px;width:32px;height:20px;border:1px solid #2e2e2e;background-color:#fff;background-image:linear-gradient(45deg,#ccc 25%,transparent 25%,transparent 75%,#ccc 75%),linear-gradient(45deg,#ccc 25%,transparent 25%,transparent 75%,#ccc 75%);background-size:8px 8px;background-position:0 0,4px 4px;overflow:hidden"><div class="abs" style="left:11px;top:11px;width:3px;height:2px;background:#a9c0d0"></div><div class="abs" style="left:17px;top:12px;width:3px;height:2px;background:#a9c0d0"></div></div>
<div class="abs serif" style="left:92px;top:850px;font-size:12px;line-height:16px;color:#c8c8c8;white-space:nowrap;letter-spacing:0.3px">图层 <span style="font-family:Liberation Sans,sans-serif;font-size:11.5px;letter-spacing:0">118</span></div>
<div class="abs" style="left:0;top:901px;width:158px;height:1px;background:#474747"></div>
<svg class="abs" style="left:8.5px;top:883px" width="14.5" height="10" viewBox="0 0 16 11"><path d="M0.6,5.5 C3,1.6 5.6,0.6 8,0.6 C10.4,0.6 13,1.6 15.4,5.5 C13,9.4 10.4,10.4 8,10.4 C5.6,10.4 3,9.4 0.6,5.5 Z" fill="#e4e4e4"/><circle cx="8" cy="5.2" r="3" fill="#535353"/><circle cx="8" cy="5.2" r="1.5" fill="#e4e4e4"/></svg>
<svg class="abs" style="left:40px;top:883px" width="8" height="10" viewBox="0 0 8 10" fill="none" stroke="#dcdcdc" stroke-width="1.3"><path d="M7,1.2 H3.6 V6.5"/><path d="M0.8,5.6 H6.4 L3.6,9 Z" fill="#dcdcdc" stroke="none"/></svg>
<div class="abs" style="left:50px;top:877px;width:32px;height:20px;border:1px solid #2e2e2e;background-color:#fff;background-image:linear-gradient(45deg,#ccc 25%,transparent 25%,transparent 75%,#ccc 75%),linear-gradient(45deg,#ccc 25%,transparent 25%,transparent 75%,#ccc 75%);background-size:8px 8px;background-position:0 0,4px 4px;overflow:hidden"><div class="abs" style="left:3px;top:5px;width:24px;height:9px;background:#56728c;filter:blur(2px);border-radius:4px"></div></div>
<div class="abs serif" style="left:92px;top:880px;font-size:12px;line-height:16px;color:#c8c8c8;white-space:nowrap;letter-spacing:0.3px">图层 <span style="font-family:Liberation Sans,sans-serif;font-size:11.5px;letter-spacing:0">117</span></div>
<div class="abs" style="left:0;top:931px;width:158px;height:1px;background:#474747"></div>
<svg class="abs" style="left:8.5px;top:913px" width="14.5" height="10" viewBox="0 0 16 11"><path d="M0.6,5.5 C3,1.6 5.6,0.6 8,0.6 C10.4,0.6 13,1.6 15.4,5.5 C13,9.4 10.4,10.4 8,10.4 C5.6,10.4 3,9.4 0.6,5.5 Z" fill="#e4e4e4"/><circle cx="8" cy="5.2" r="3" fill="#535353"/><circle cx="8" cy="5.2" r="1.5" fill="#e4e4e4"/></svg>
<div class="abs" style="left:34px;top:907px;width:32px;height:20px;border:1px solid #2e2e2e;background-color:#fff;background-image:linear-gradient(45deg,#ccc 25%,transparent 25%,transparent 75%,#ccc 75%),linear-gradient(45deg,#ccc 25%,transparent 25%,transparent 75%,#ccc 75%);background-size:8px 8px;background-position:0 0,4px 4px;overflow:hidden"><div class="abs" style="left:8px;top:3px;width:14px;height:13px;background:#5c7890"></div></div>
<div class="abs serif" style="left:76px;top:910px;font-size:12px;line-height:16px;color:#c8c8c8;white-space:nowrap;text-decoration:underline;letter-spacing:0.3px">图层 <span style="font-family:Liberation Sans,sans-serif;font-size:11.5px;letter-spacing:0">78</span></div>
<div class="abs" style="left:0;top:934px;width:158px;height:26px;background:#535353;border-top:1px solid #474747"></div>
<svg class="abs" style="left:48px;top:938px" width="110" height="18" viewBox="1618 1010 110 18" fill="none" stroke="#dcdcdc" stroke-width="1.2">
<g stroke="#8c8c8c"><rect x="1621.5" y="1015.5" width="7" height="5" rx="2.5"/><rect x="1627.5" y="1015.5" width="7" height="5" rx="2.5"/><path d="M1625,1018 H1631"/></g>
<text x="1648" y="1023" font-family="Liberation Serif, serif" font-style="italic" font-size="15" fill="#dcdcdc" stroke="none">fx</text><path d="M1660,1024 h4 l-2,2.4 z" fill="#dcdcdc" stroke="none"/>
<rect x="1675" y="1012" width="12" height="10" fill="#dcdcdc" stroke="none"/><circle cx="1681" cy="1017" r="3" fill="#535353" stroke="none"/>
<circle cx="1709" cy="1018" r="5"/><path d="M1712.5,1014.5 A5,5 0 0 1 1705.5,1021.5 Z" fill="#dcdcdc" stroke="none"/><path d="M1713,1024 h4 l-2,2.4 z" fill="#dcdcdc" stroke="none"/>
</svg></div>
<div class="abs" id="blackbar"></div>
</body>
</html>
